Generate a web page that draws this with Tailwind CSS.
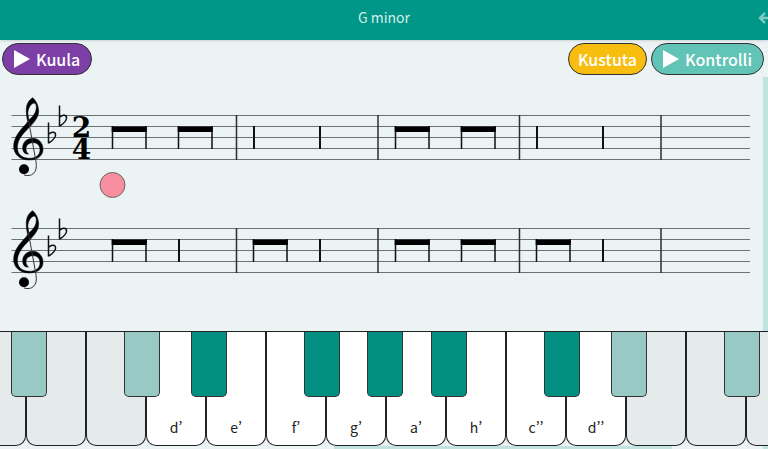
<!DOCTYPE html>
<html lang="et">
<head>
    <meta charset="UTF-8">
    <meta name="viewport" content="width=device-width, initial-scale=1.0">
    <title>G minor</title>
    <script src="https://cdn.jsdelivr.net/npm/@tailwindcss/browser@4"></script>
</head>
<body class="bg-[#ebf3f4] font-['Noto_Sans_CJK_SC','Noto_Sans',sans-serif] text-[#212121] overflow-hidden">
    <div class="flex flex-col min-h-screen relative">
        <header class="relative z-10 flex items-center justify-center h-10 bg-[#009688] shadow">
            <h1 class="text-sm leading-5 text-[#d5eeeb] -mt-1.5">G minor</h1>
            <a href="#" aria-label="Tagasi" class="absolute -right-1 top-3 text-[#7fcac3]">
                <svg class="w-3.5 h-3" viewBox="0 0 14 12" fill="none" stroke="currentColor" stroke-width="2.400"><path d="M7 1 2 6 7 11M2 6h12"/></svg>
            </a>
        </header>

        <div class="flex items-center justify-between pl-0.5 pr-1 pt-[3px]">
            <button type="button" class="flex items-center gap-1.5 h-8 px-[11px] rounded-full border border-[#333] bg-[#7b3fa5] text-white text-base font-medium leading-5">
                <svg class="w-4 h-[18px]" viewBox="0 0 16 18" fill="currentColor"><path d="M0 0 16 9 0 18z"/></svg>
                Kuula
            </button>
            <div class="flex gap-1">
                <button type="button" class="h-8 px-[9px] rounded-full border border-[#333] bg-[#f7bd0f] text-white text-base font-medium leading-5">Kustuta</button>
                <button type="button" class="flex items-center gap-1.5 h-8 px-[11px] rounded-full border border-[#333] bg-[#62c3b7] text-white text-base font-medium leading-5">
                    <svg class="w-4 h-[18px]" viewBox="0 0 16 18" fill="currentColor"><path d="M0 0 16 9 0 18z"/></svg>
                    Kontrolli
                </button>
            </div>
        </div>

        <main class="flex-1 flex flex-col pt-[15px]">
            <svg class="w-full h-auto" viewBox="0 0 768 113" role="img" aria-label="Noodijoonestik 1">
                <defs>
                    <g id="staff">
                        <path d="M11.500 25.500H750M11.500 36.500H750M11.500 47.500H750M11.500 58.500H750M11.500 69.500H750" stroke="#6c7272" stroke-width="1.200"/>
                        <path d="M236.500 25V70M378 25V70M519.500 25V70M661 25V70" stroke="#2b2f2f" stroke-width="1.500"/>
                        <!-- treble clef, drawn at three times its size -->
                        <g transform="scale(.33333)">
                            <path d="M98 23C108 32 116 46 116 64C115 84 101 99 85 115C68 132 53 149 52 172C52 195 68 205 88 205C108 205 120 195 120 179C120 166 112 158 100 158C86 158 78 166 78 176C78 184 81 189 86 192C76 194 68 187 68 174C68 156 81 145 98 145C116 145 129 159 129 178C129 198 112 210 88 210C59 210 41 193 41 169C41 142 61 119 79 101C80 99 82 96 83 95C80 81 78 69 79 55C80 40 89 28 98 23ZM87 90C99 79 109 68 109 51C109 44 106 39 102 39C92 41 82 57 84 74Z" fill="#000" stroke="#000" stroke-width="1.500"/>
                            <path d="M85 88 108 215C114 248 95 262 72 255" fill="none" stroke="#333" stroke-width="3"/>
                            <circle cx="72" cy="238" r="15"/>
                        </g>
                        <path id="flat" d="M59.500 15.500V36.500M60 27C63 24 67 25 66.500 28.500C66 32 62 34.500 60 36" fill="none" stroke="#111" stroke-width="1.500"/>
                        <use href="#flat" x="-11" y="17"/>
                    </g>
                    <path id="stem" d="M0 36V59" stroke="#111" stroke-width="2"/>
                    <g id="pair">
                        <path d="M0 36V59M33.500 36V59" stroke="#111" stroke-width="1.500"/>
                        <path d="M-.8 36.500H34.300V42H-.8z"/>
                    </g>
                </defs>
                <use href="#staff"/>
                <g font-family="DejaVu Serif, serif" font-weight="700" font-size="28" text-anchor="middle">
                    <text x="81.500" y="47">2</text>
                    <text x="81.500" y="69">4</text>
                </g>
                <use href="#pair" x="112.500"/>
                <use href="#pair" x="178.500"/>
                <use href="#stem" x="254"/>
                <use href="#stem" x="320"/>
                <use href="#pair" x="395.500"/>
                <use href="#pair" x="461.500"/>
                <use href="#stem" x="537"/>
                <use href="#stem" x="603"/>
                <circle cx="112.500" cy="95" r="12.500" fill="#f78fa0" stroke="#666"/>
            </svg>
            <svg class="w-full h-auto" viewBox="0 0 768 113" role="img" aria-label="Noodijoonestik 2">
                <use href="#staff"/>
                <use href="#pair" x="112.500"/>
                <use href="#stem" x="179"/>
                <use href="#pair" x="253.500"/>
                <use href="#stem" x="320"/>
                <use href="#pair" x="395.500"/>
                <use href="#pair" x="461.500"/>
                <use href="#pair" x="536.500"/>
                <use href="#stem" x="603"/>
            </svg>
        </main>

        <div class="relative z-10 overflow-hidden mt-auto mb-[3px] border-t border-[#222]">
            <div id="keys" class="flex -ml-[34px]"></div>
        </div>

        <div class="absolute right-0 top-[77px] bottom-0 w-[5px] bg-[#c1e3df]"></div>
        <div class="absolute left-[43.500%] right-[12.500%] bottom-0 h-[3px] bg-[#c1e3df]"></div>
    </div>

    <script>
        // black: where the black key sits over the right edge of the white one
        const keys = [
            { black: 'left-[45px]' },
            {},
            { black: 'left-[38px]' },
            { name: 'd’', black: 'left-[45px]', on: true },
            { name: 'e’' },
            { name: 'f’', black: 'left-[38px]', on: true },
            { name: 'g’', black: 'left-[41px]', on: true },
            { name: 'a’', black: 'left-[45px]', on: true },
            { name: 'h’' },
            { name: 'c’’', black: 'left-[38px]', on: true },
            { name: 'd’’', black: 'left-[45px]' },
            {},
            { black: 'left-[38px]' },
            {}
        ];

        const container = document.getElementById('keys');

        keys.forEach(function(key) {
            const wrap = document.createElement('div');
            wrap.className = 'relative shrink-0 w-[60px] h-[114px]';

            const white = document.createElement('button');
            white.type = 'button';
            white.className = 'flex items-end justify-center w-full h-full pb-2 text-sm leading-5 [font-feature-settings:"pwid"] border border-t-0 border-[#222] rounded-b-[10px] ' + (key.name ? 'bg-white' : 'bg-[#e4ebea]');
            white.textContent = key.name || '';
            if (!key.name) {
                white.disabled = true;
                white.setAttribute('aria-label', 'Klahv');
            }
            wrap.appendChild(white);

            if (key.black) {
                const black = document.createElement('button');
                black.type = 'button';
                black.disabled = !key.on;
                black.setAttribute('aria-label', 'Must klahv');
                black.className = 'absolute top-0 z-10 w-9 h-[65px] border border-t-0 border-[#333] rounded-b-[5px] ' + key.black + (key.on ? ' bg-[#008f80]' : ' bg-[#99c9c4]');
                wrap.appendChild(black);
            }
            container.appendChild(wrap);
        });
    </script>
</body>
</html>
